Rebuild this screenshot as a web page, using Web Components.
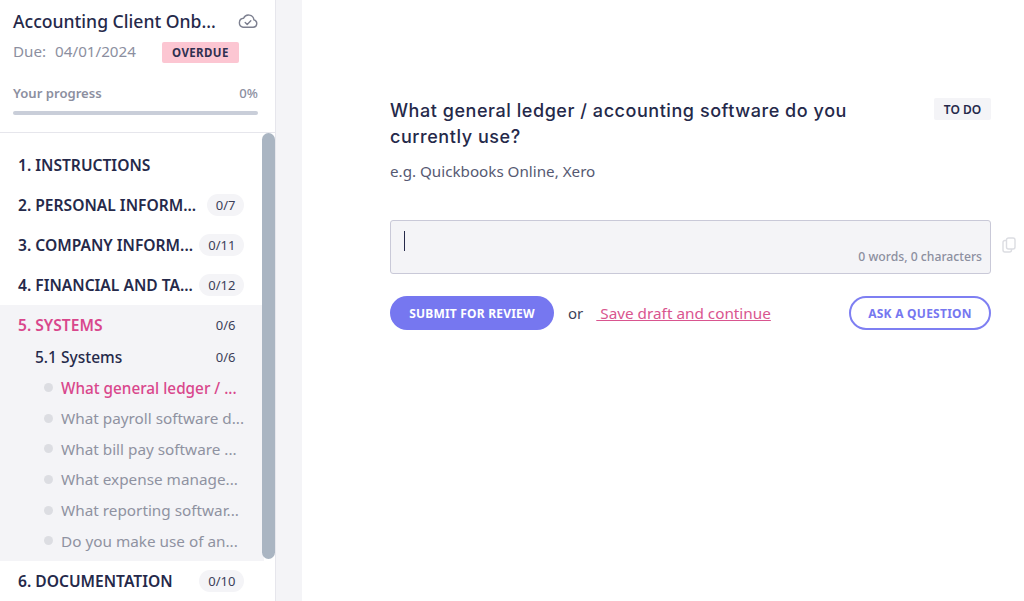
<!DOCTYPE html>
<html>
<head>
<meta charset="utf-8">
<title>Accounting Client Onboarding</title>
<style>
  html, body { margin: 0; height: 100%; overflow: hidden; background: #fff; }
  body { font-family: "Noto Sans", sans-serif; color: #25294a; }
  app-shell { height: 601px; }
</style>
</head>
<body>
<app-shell>
  <side-panel slot="side">
    <panel-head slot="head" title-text="Accounting Client Onb..." due="04/01/2024"></panel-head>
    <nav-section num="1. INSTRUCTIONS"></nav-section>
    <nav-section num="2. PERSONAL INFORM..." count="0/7"></nav-section>
    <nav-section num="3. COMPANY INFORM..." count="0/11"></nav-section>
    <nav-section num="4. FINANCIAL AND TA..." count="0/12"></nav-section>
    <nav-group>
      <nav-section num="5. SYSTEMS" count="0/6" active></nav-section>
      <nav-sub label="5.1 Systems" count="0/6"></nav-sub>
      <nav-item current>What general ledger / ...</nav-item>
      <nav-item>What payroll software d...</nav-item>
      <nav-item>What bill pay software ...</nav-item>
      <nav-item>What expense manage...</nav-item>
      <nav-item>What reporting softwar...</nav-item>
      <nav-item>Do you make use of an...</nav-item>
    </nav-group>
    <nav-section num="6. DOCUMENTATION" count="0/10"></nav-section>
  </side-panel>
  <question-view slot="main"></question-view>
</app-shell>

<script>
// page frame: sidebar, grey gutter, main
customElements.define("app-shell", class extends HTMLElement {
  constructor() {
    super();
    this.attachShadow({ mode: "open" }).innerHTML = `
      <style>
        :host { display: flex; }
        .side { flex: 0 0 275px; border-right: 1px solid #e6e6ec; height: 601px; overflow: hidden; }
        .gutter { flex: 0 0 26px; background: #f4f4f7; }
        .main { flex: 1; min-width: 0; }
      </style>
      <div class="side"><slot name="side"></slot></div>
      <div class="gutter"></div>
      <div class="main"><slot name="main"></slot></div>`;
  }
});

customElements.define("side-panel", class extends HTMLElement {
  constructor() {
    super();
    this.attachShadow({ mode: "open" }).innerHTML = `
      <style>
        :host { display: block; height: 100%; }
        .list { position: relative; padding-top: 12px; padding-right: 11px; height: 456px; overflow: hidden; }
        .thumb { position: absolute; right: 0; top: 0; width: 13px; height: 426px; border-radius: 7px; background: #aab5c2; }
      </style>
      <slot name="head"></slot>
      <div class="list"><slot></slot><div class="thumb"></div></div>`;
  }
});

customElements.define("panel-head", class extends HTMLElement {
  constructor() {
    super();
    const title = this.getAttribute("title-text");
    const due = this.getAttribute("due");
    this.attachShadow({ mode: "open" }).innerHTML = `
      <style>
        :host { display: block; height: 133px; box-sizing: border-box; padding: 9px 17px 0 13px; border-bottom: 1px solid #e6e6ec; }
        .top { display: flex; align-items: center; justify-content: space-between; height: 24px; }
        .title { font-size: 17.6px; font-weight: 500; color: #25294a; white-space: nowrap; }
        svg { display: block; }
        .due { display: flex; align-items: center; height: 24px; margin-top: 6px; font-size: 15.2px; color: #8c8f9f; }
        .due b { font-weight: 400; margin-left: 9px; }
        .tag { margin-left: 26px; margin-top: 2px; background: #fcc6d2; border-radius: 2px; height: 21px; width: 77px; display: flex; align-items: center; justify-content: center; font-size: 11.5px; font-weight: 700; letter-spacing: .4px; color: #2f3150; }
        .prog { display: flex; justify-content: space-between; margin-top: 22px; font-size: 13.1px; font-weight: 600; color: #8c8f9f; line-height: 17px; }
        .prog span + span { font-weight: 500; }
        .bar { height: 4px; margin-top: 9px; border-radius: 2px; background: #c9ced9; }
      </style>
      <div class="top">
        <span class="title">${title}</span>
        <svg width="20" height="16" viewBox="0 0 20 16" fill="none" stroke="#7d8090" stroke-width="1.4" stroke-linecap="round" stroke-linejoin="round">
          <path d="M5 14.2h10.2a3.7 3.7 0 0 0 .7-7.3A5.4 5.4 0 0 0 5.6 5.3 4.5 4.5 0 0 0 5 14.2z"/>
          <path d="M7.2 9.4l2 2 3.6-3.6"/>
        </svg>
      </div>
      <div class="due">Due:<b>${due}</b><span class="tag">OVERDUE</span></div>
      <div class="prog"><span>Your progress</span><span>0%</span></div>
      <div class="bar"></div>`;
  }
});

customElements.define("nav-section", class extends HTMLElement {
  constructor() {
    super();
    const count = this.getAttribute("count");
    const active = this.hasAttribute("active");
    this.attachShadow({ mode: "open" }).innerHTML = `
      <style>
        :host { display: flex; align-items: center; justify-content: space-between; height: 40.1px; padding: 0 20px 0 18px; }
        :host([active]) { height: 40px; }
        .name { font-size: 15.6px; font-weight: 600; white-space: nowrap; color: ${active ? "#d9478c" : "#25294a"}; }
        .count { font-size: 13px; color: #3c3f59; border-radius: 11px; height: 22px; display: flex; align-items: center; padding: 0 8.5px 0 9px; background: ${active ? "transparent" : "#f4f4f7"}; }
      </style>
      <span class="name">${this.getAttribute("num")}</span>
      ${count ? `<span class="count">${count}</span>` : ""}`;
  }
});

// shaded block around the open section
customElements.define("nav-group", class extends HTMLElement {
  constructor() {
    super();
    this.attachShadow({ mode: "open" }).innerHTML = `
      <style>:host { display: block; background: #f4f4f7; padding-bottom: 5px; }</style>
      <slot></slot>`;
  }
});

customElements.define("nav-sub", class extends HTMLElement {
  constructor() {
    super();
    this.attachShadow({ mode: "open" }).innerHTML = `
      <style>
        :host { display: flex; align-items: center; justify-content: space-between; height: 23px; margin-bottom: 4px; padding: 0 20px 0 35px; }
        .name { font-size: 15.5px; font-weight: 500; color: #25294a; }
        .count { font-size: 13px; color: #3c3f59; padding: 0 8.5px 0 9px; }
      </style>
      <span class="name">${this.getAttribute("label")}</span>
      <span class="count">${this.getAttribute("count")}</span>`;
  }
});

customElements.define("nav-item", class extends HTMLElement {
  constructor() {
    super();
    this.attachShadow({ mode: "open" }).innerHTML = `
      <style>
        :host { display: flex; align-items: center; height: 30.6px; padding-left: 44px; font-size: 15.3px; color: #8f92a1; white-space: nowrap; }
        :host([current]) { color: #d9478c; font-weight: 500; }
        i { flex: none; width: 9px; height: 9px; border-radius: 50%; background: #dcdde2; margin-right: 8px; }
      </style>
      <i></i><slot></slot>`;
  }
});

customElements.define("question-view", class extends HTMLElement {
  constructor() {
    super();
    this.attachShadow({ mode: "open" }).innerHTML = `
      <style>
        :host { display: block; padding: 98px 33px 0 88px; }
        .head { display: flex; justify-content: space-between; align-items: flex-start; }
        h2 { margin: 0; font: 500 18px/26px Inter, sans-serif; letter-spacing: .55px; color: #25294a; width: 490px; }
        .todo { background: #f4f4f7; border-radius: 2px; height: 22px; width: 57px; display: flex; align-items: center; justify-content: center; font-size: 12px; font-weight: 600; color: #25294a; }
        .hint { margin-top: 11px; font-size: 15.2px; line-height: 21px; color: #565972; }
        .field { position: relative; margin-top: 38px; height: 54px; box-sizing: border-box; border: 1px solid #c9c9d8; border-radius: 3px; background: #f4f4f7; }
        .caret { position: absolute; left: 13px; top: 10px; width: 1px; height: 20px; background: #25294a; }
        .stat { position: absolute; right: 8px; bottom: 8px; font-size: 12.2px; font-weight: 500; color: #8c8f9f; line-height: 16px; }
        .copy { position: absolute; left: 100%; top: 16px; margin-left: 12px; display: block; }
        .actions { display: flex; align-items: center; margin-top: 22px; }
        .submit { height: 34px; width: 164px; display: flex; align-items: center; justify-content: center; border-radius: 17px; background: #7677f0; color: #fff; font-size: 12px; font-weight: 700; letter-spacing: .2px; }
        .or { margin-left: 14px; font-size: 15px; color: #3c3f59; }
        .save { margin-left: 13px; font-size: 15.3px; color: #d9558f; text-decoration: underline; white-space: pre; }
        .ask { margin-left: auto; height: 34px; width: 142px; box-sizing: border-box; display: flex; align-items: center; justify-content: center; border: 2px solid #7e7ff2; border-radius: 17px; color: #7677f0; font-size: 12px; font-weight: 700; letter-spacing: .25px; }
      </style>
      <div class="head">
        <h2>What general ledger / accounting software do you currently use?</h2>
        <span class="todo">TO DO</span>
      </div>
      <div class="hint">e.g. Quickbooks Online, Xero</div>
      <div class="field">
        <div class="caret"></div>
        <span class="stat">0 words, 0 characters</span>
        <svg class="copy" width="14" height="16" viewBox="0 0 14 16" fill="none" stroke="#dcdde2" stroke-width="1.4" stroke-linejoin="round">
          <rect x="4.5" y="1" width="8.5" height="11" rx="2"/>
          <path d="M4.5 3.5h-1.5a2 2 0 0 0-2 2v7.5a2 2 0 0 0 2 2h4.5a2 2 0 0 0 2-2v-1"/>
        </svg>
      </div>
      <div class="actions">
        <span class="submit">SUBMIT FOR REVIEW</span>
        <span class="or">or</span>
        <span class="save"> Save draft and continue</span>
        <span class="ask">ASK A QUESTION</span>
      </div>`;
  }
});
</script>
</body>
</html>
